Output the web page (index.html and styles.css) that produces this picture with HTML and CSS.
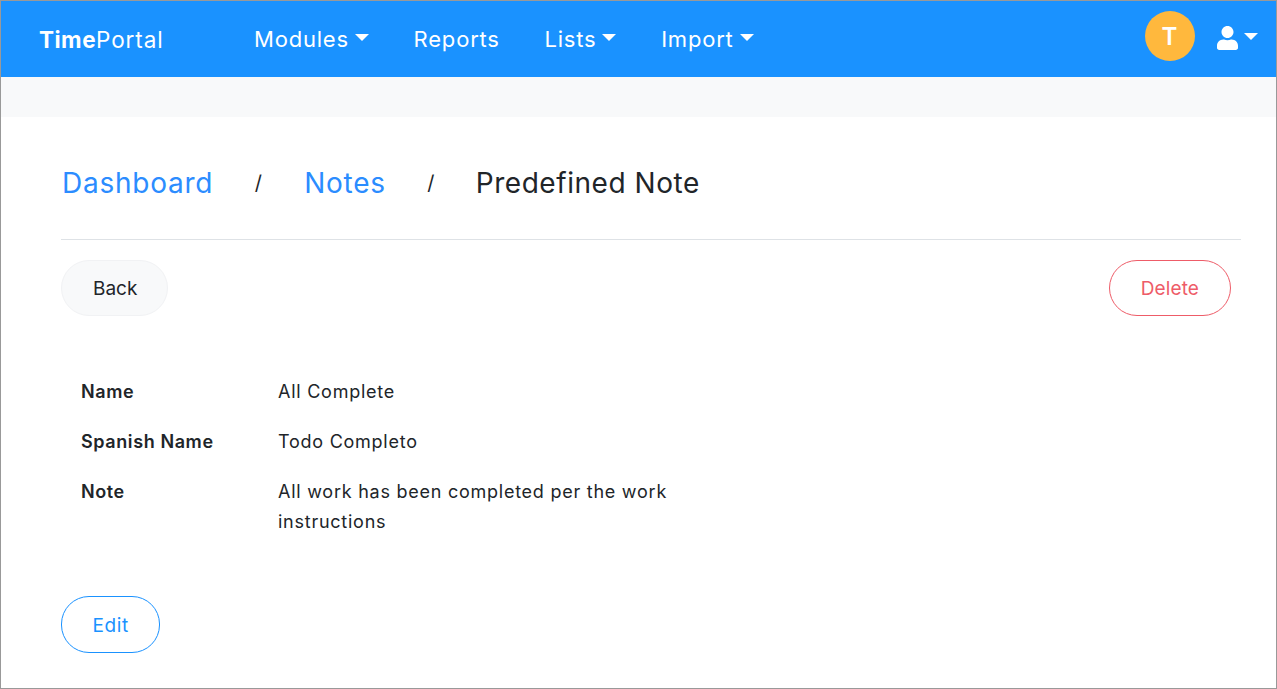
FILE: index.html
```html
<!DOCTYPE html>
<html lang="en">
<head>
<meta charset="utf-8">
<title>TimePortal</title>
<link rel="stylesheet" href="styles.css">
</head>
<body>
<div class="frame">
  <nav class="navbar">
    <a class="brand"><b>Time</b>Portal</a>
    <ul class="menu">
      <li class="caret">Modules</li>
      <li>Reports</li>
      <li class="caret">Lists</li>
      <li class="caret">Import</li>
    </ul>
    <div class="nav-right">
      <span class="avatar">T</span>
      <span class="caret user">
        <svg width="23" height="24" viewBox="0 0 448 512" aria-hidden="true"><path fill="#fff" d="M224 256c70.700 0 128-57.300 128-128S294.700 0 224 0 96 57.300 96 128s57.300 128 128 128zm89.600 32h-16.700c-22.200 10.200-46.900 16-72.900 16s-50.600-5.800-72.900-16h-16.700C60.200 288 0 348.200 0 422.400V464c0 26.500 21.500 48 48 48h352c26.500 0 48-21.500 48-48v-41.600c0-74.200-60.200-134.400-134.400-134.400z"/></svg>
      </span>
    </div>
  </nav>
  <div class="band"></div>
  <main class="content">
    <ol class="crumbs">
      <li class="link">Dashboard</li>
      <li class="sep">/</li>
      <li class="link">Notes</li>
      <li class="sep">/</li>
      <li class="current">Predefined Note</li>
    </ol>
    <div class="actions">
      <a class="btn btn-light">Back</a>
      <a class="btn btn-danger">Delete</a>
    </div>
    <dl class="details">
      <dt>Name</dt><dd>All Complete</dd>
      <dt>Spanish Name</dt><dd>Todo Completo</dd>
      <dt>Note</dt><dd>All work has been completed per the work instructions</dd>
    </dl>
    <a class="btn btn-primary">Edit</a>
  </main>
</div>
</body>
</html>
```
FILE: styles.css
```css
* { box-sizing: border-box; }
html, body { margin: 0; height: 100%; }
body {
  font-family: "Inter", "Liberation Sans", sans-serif;
  color: #212529;
  background: #fff;
  overflow: hidden;
}
.frame {
  height: 689px;
  border: 1px solid #999;
  display: flex;
  flex-direction: column;
  overflow: hidden;
}
.navbar {
  height: 76px;
  background: #1a92ff;
  color: #fff;
  display: flex;
  align-items: center;
  padding: 0 18px 0 38px;
  flex: none;
}
.brand { font-size: 22.5px; letter-spacing: 0.9px; width: 215px; font-weight: 400; }
.brand b { font-weight: 700; letter-spacing: 0.5px; }
.menu {
  list-style: none;
  display: flex;
  gap: 44.7px;
  margin: 0;
  padding: 0;
  font-size: 22px;
  letter-spacing: 0.8px;
  flex: 1;
}
.caret { display: inline-flex; align-items: center; }
.caret::after {
  content: "";
  margin-left: 6px;
  border-top: 7px solid #fff;
  border-left: 7px solid transparent;
  border-right: 7px solid transparent;
  margin-top: -3px;
}
.nav-right { display: flex; align-items: center; gap: 21px; }
.avatar {
  width: 50px;
  height: 50px;
  margin-top: -6px;
  border-radius: 50%;
  background: #ffb83d;
  color: #fff;
  font-size: 24px;
  font-weight: 600;
  display: flex;
  align-items: center;
  justify-content: center;
  padding-right: 1px;
}
.user { margin-top: -3px; }
.user::after { margin-left: 5px; }
.user svg { display: block; }
.band { height: 40px; background: #f8f9fa; flex: none; }
.content { padding: 0 35px 0 60px; flex: 1; display: flex; flex-direction: column; align-items: flex-start; }
.crumbs {
  list-style: none;
  margin: 0;
  padding: 46px 0 36px 1px;
  width: 100%;
  height: 123px;
  display: flex;
  align-items: center;
  gap: 41.5px;
  font-size: 28px;
  letter-spacing: 0.75px;
  line-height: 40px;
  border-bottom: 1px solid #dee2e6;
}
.link { color: #2b8cff; }
.sep { font-size: 20px; }
.current { letter-spacing: 0.55px; margin-left: -1px; }
.actions { display: flex; justify-content: space-between; width: 100%; padding: 20px 10px 0 0; }
.btn {
  display: flex;
  align-items: center;
  justify-content: center;
  height: 56px;
  padding: 0 31px;
  border-radius: 28px;
  font-size: 19px;
  letter-spacing: 0.1px;
  border: 1px solid transparent;
}
.btn-light { background: #f8f9fa; border-color: #f1f2f4; color: #212529; padding: 0 30px 0 31px; letter-spacing: 0; }
.btn-danger { border-color: #ee5c68; color: #ee5c68; }
.btn-primary { border-color: #1a92ff; color: #1a92ff; height: 57px; padding: 1px 30.5px 0; letter-spacing: 0.6px; }
.details {
  display: grid;
  grid-template-columns: 197px 397px;
  margin: 60px 0 59px 20px;
  padding-top: 1px;
  font-size: 18px;
  line-height: 30px;
  row-gap: 20px;
}
.details dt { font-weight: 600; letter-spacing: 0.6px; }
.details dd { margin: 0; letter-spacing: 0.75px; }
```
